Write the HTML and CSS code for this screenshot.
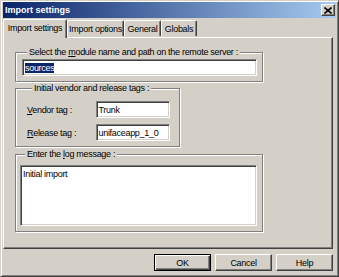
FILE: index.html
```html
<!DOCTYPE html>
<html>
<head>
<meta charset="utf-8">
<link rel="stylesheet" href="styles.css">
</head>
<body>
<div class="win">
  <div class="title">
    <span class="title-text">Import settings</span>
    <div class="close">
      <svg width="8" height="7" viewBox="0 0 8 7"><path d="M0.5 0.5 L7.5 6.5 M7.5 0.5 L0.5 6.5" stroke="#000" stroke-width="1.6" fill="none"/></svg>
    </div>
  </div>
  <div class="content">
    <div class="tabs">
      <div class="tab sel t1">Import settings</div>
      <div class="tab t2">Import options</div>
      <div class="tab t3">General</div>
      <div class="tab t4">Globals</div>
    </div>
    <div class="panel">
      <fieldset class="grp g1">
        <legend>Select the <u>m</u>odule name and path on the remote server :</legend>
        <div class="input wide"><span class="selected">sources</span></div>
      </fieldset>
      <fieldset class="grp g2">
        <legend>Initial vendor and release tags :</legend>
        <div class="row"><span class="lbl"><u>V</u>endor tag :</span><div class="input tag">Trunk</div></div>
        <div class="row"><span class="lbl"><u>R</u>elease tag :</span><div class="input tag">unifaceapp_1_0</div></div>
      </fieldset>
      <fieldset class="grp g3">
        <legend>Enter the <u>l</u>og message :</legend>
        <div class="input area">Initial import</div>
      </fieldset>
    </div>
    <div class="buttons">
      <div class="btn default">OK</div>
      <div class="btn">Cancel</div>
      <div class="btn">Help</div>
    </div>
  </div>
</div>
</body>
</html>
```
FILE: styles.css
```css
* { box-sizing: border-box; }
body {
  margin: 0;
  width: 339px;
  height: 277px;
  overflow: hidden;
  background: #d4d0c8;
  font-family: "Liberation Sans", Arial, sans-serif;
  font-size: 9px;
  letter-spacing: -0.3px;
  color: #000;
}
.win {
  width: 339px;
  height: 277px;
  background: #d4d0c8;
  border: 1px solid;
  border-color: #d4d0c8 #404040 #404040 #d4d0c8;
  box-shadow: inset 1px 1px 0 #fff, inset -1px -1px 0 #808080;
  padding: 1px 2px 2px 2px;
  display: flex;
  flex-direction: column;
}
.title {
  height: 16px;
  flex: none;
  background: linear-gradient(to right, #0a246a, #a6caf0);
  color: #fff;
  font-weight: bold;
  display: flex;
  align-items: center;
  justify-content: space-between;
  padding: 0 1px 0 2px;
  letter-spacing: 0;
}
.close {
  width: 14px;
  height: 12px;
  background: #d4d0c8;
  border: 1px solid;
  border-color: #fff #404040 #404040 #fff;
  box-shadow: inset -1px -1px 0 #808080;
  display: flex;
  align-items: center;
  justify-content: center;
}
.content {
  flex: 1;
  display: flex;
  flex-direction: column;
  padding: 0 3px 0 0;
}
.tabs {
  height: 19px;
  display: flex;
  align-items: flex-end;
  padding-left: 0;
  position: relative;
  z-index: 1;
}
.tab {
  height: 16px;
  margin-bottom: 1px;
  border: 1px solid;
  border-bottom: none;
  border-color: #fff #404040 #fff #fff;
  box-shadow: inset -1px 0 0 #808080;
  border-radius: 2px 2px 0 0;
  display: flex;
  align-items: center;
  justify-content: center;
  background: #d4d0c8;
}
.tab.sel {
  height: 19px;
  margin-bottom: -1px;
  padding-bottom: 2px;
}
.t1 { width: 64px; }
.t2 { width: 57px; }
.t3 { width: 37px; }
.t4 { width: 36px; }
.panel {
  height: 212px;
  flex: none;
  border: 1px solid;
  border-color: #fff #404040 #404040 #fff;
  box-shadow: inset -1px -1px 0 #808080;
  padding: 9px 0 0 11px;
  display: flex;
  flex-direction: column;
  align-items: flex-start;
}
.grp {
  margin: 0;
  padding: 0;
  border: 1px solid #808080;
  box-shadow: 1px 1px 0 #fff, inset 1px 1px 0 #fff;
  min-width: 0;
}
.grp legend {
  margin-left: 5px;
  padding: 0 2px;
  line-height: 11px;
  background: #d4d0c8;
}
.g1 { width: 248px; padding: 1px 6px 5px 6px; }
.g2 { width: 165px; margin-top: 1px; padding: 7px 9px 5px 11px; }
.g3 { width: 248px; margin-top: 2px; padding: 5px 6px 5px 4px; }
.input {
  background: #fff;
  border: 1px solid;
  border-color: #808080 #fff #fff #808080;
  box-shadow: inset 1px 1px 0 #404040, inset -1px -1px 0 #d4d0c8;
  height: 17px;
  padding: 0 2px;
  display: flex;
  align-items: center;
  white-space: nowrap;
  overflow: hidden;
}
.input.wide { width: 235px; }
.selected { background: #0a246a; color: #fff; }
.row { display: flex; align-items: center; }
.row + .row { margin-top: 6px; }
.lbl { width: 69px; }
.input.tag { width: 75px; }
.input.area {
  width: 237px;
  height: 61px;
  align-items: flex-start;
  padding: 3px 2px;
}
.buttons {
  display: flex;
  justify-content: flex-end;
  gap: 4px;
  margin-top: 5px;
}
.btn {
  width: 57px;
  height: 17px;
  border: 1px solid;
  border-color: #fff #404040 #404040 #fff;
  box-shadow: inset -1px -1px 0 #808080;
  display: flex;
  align-items: center;
  justify-content: center;
}
.btn.default {
  border: 1px solid #000;
  box-shadow: inset 1px 1px 0 #fff, inset -1px -1px 0 #404040, inset -2px -2px 0 #808080;
}
```
